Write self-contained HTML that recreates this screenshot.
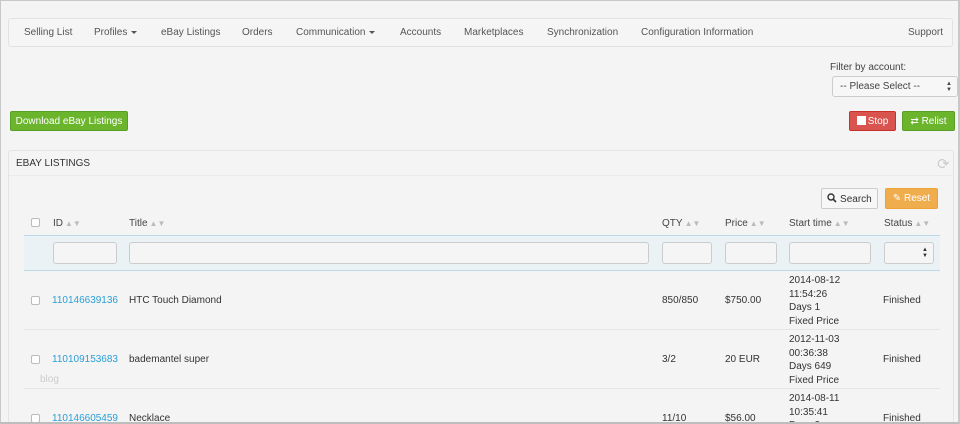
<!DOCTYPE html>
<html><head><style>
*{box-sizing:border-box;margin:0;padding:0}
html,body{width:960px;height:424px;overflow:hidden;background:#f4f4f4}
body{font-family:"Liberation Sans",sans-serif;font-size:10px;color:#333;position:relative}
.frame{position:absolute;left:0;top:0;width:960px;height:424px;border:1px solid #c8c8c8;border-right:2px solid #c8c8c8;border-bottom:2px solid #bdbdbd;z-index:5}
.w{position:absolute;left:0;top:1px;width:960px;height:424px}
.a{position:absolute;white-space:nowrap}
.nav{position:absolute;left:8px;top:17px;width:945px;height:29px;border:1px solid #e2e2e2;border-radius:3px;background:#f5f5f5}
.nav span{position:absolute;top:8px;color:#555;font-size:10px}
.car{display:inline-block;border-top:3px solid #555;border-left:3px solid transparent;border-right:3px solid transparent;vertical-align:middle;margin-left:4px}
.btn{position:absolute;border-radius:2px;color:#fff;font-size:10px;text-align:center}
.inp{position:absolute;top:242px;height:22px;border:1px solid #ccc;border-radius:3px;background:#f5f5f5}
.sort{color:#bbb;font-size:8px;margin-left:2px}
.th{position:absolute;top:217px;color:#444}
.cb{position:absolute;left:31px;width:9px;height:9px;border:1px solid #bbb;border-radius:2px;background:#fff}
.link{color:#2a9fd6}
.hr{position:absolute;left:24px;width:916px;height:1px;background:#e6e6e6}
.t{line-height:13.5px}
</style></head><body>
<div class="frame"></div>
<div class="w">
<div class="nav">
<span style="left:15px">Selling List</span>
<span style="left:85px">Profiles<i class="car"></i></span>
<span style="left:152px">eBay Listings</span>
<span style="left:233px">Orders</span>
<span style="left:287px">Communication<i class="car"></i></span>
<span style="left:391px">Accounts</span>
<span style="left:455px">Marketplaces</span>
<span style="left:538px">Synchronization</span>
<span style="left:632px">Configuration Information</span>
<span style="left:899px">Support</span>
</div>
<div class="a" style="left:830px;top:61px;color:#444">Filter by account:</div>
<div class="a" style="left:832px;top:75px;width:126px;height:21px;border:1px solid #ccc;border-radius:3px;background:#f7f7f7;padding:4px 0 0 7px;color:#444">-- Please Select --<span style="position:absolute;right:5px;top:4px;font-size:6px;line-height:6px">▲<br>▼</span></div>
<div class="btn" style="left:10px;top:110px;width:118px;height:20px;background:#6bb52d;border:1px solid #5a9f25;padding-top:4px">Download eBay Listings</div>
<div class="btn" style="left:849px;top:110px;width:47px;height:20px;background:#d9534f;border:1px solid #c9302c;padding-top:4px"><span style="display:inline-block;width:9px;height:9px;background:#fff;vertical-align:-1px;margin-right:2px"></span>Stop</div>
<div class="btn" style="left:902px;top:110px;width:53px;height:20px;background:#6bb52d;border:1px solid #5a9f25;padding-top:4px">⇄ Relist</div>
<div class="a" style="left:8px;top:149px;width:946px;height:280px;border:1px solid #e4e4e4;border-radius:3px"></div>
<div class="a" style="left:9px;top:174px;width:944px;height:1px;background:#eaeaea"></div>
<div class="a" style="left:16px;top:157px;font-size:10px;color:#333;font-family:'Liberation Sans Narrow','Liberation Sans',sans-serif">EBAY LISTINGS</div>
<div class="a" style="left:937px;top:154px;font-size:15px;color:#ccc">⟳</div>
<div class="btn" style="left:821px;top:187px;width:57px;height:21px;border:1px solid #ccc;background:#f7f7f7;color:#333;padding-top:4px"><svg width="10" height="10" viewBox="0 0 10 10" style="vertical-align:-1px"><circle cx="4" cy="4" r="3" fill="none" stroke="#333" stroke-width="1.4"/><path d="M6.2 6.2L9 9" stroke="#333" stroke-width="1.6"/></svg> Search</div>
<div class="btn" style="left:885px;top:187px;width:53px;height:21px;background:#f0ad4e;border:1px solid #eea236;padding-top:4px">✎ Reset</div>
<div class="cb" style="top:217px"></div>
<div class="th" style="left:53px">ID<span class="sort">▲▼</span></div>
<div class="th" style="left:129px">Title<span class="sort">▲▼</span></div>
<div class="th" style="left:662px">QTY<span class="sort">▲▼</span></div>
<div class="th" style="left:725px">Price<span class="sort">▲▼</span></div>
<div class="th" style="left:789px">Start time<span class="sort">▲▼</span></div>
<div class="th" style="left:884px">Status<span class="sort">▲▼</span></div>
<div class="a" style="left:24px;top:234px;width:916px;height:36px;background:#eaf2f5;border-top:1px solid #bcd9e8;border-bottom:1px solid #bcd9e8"></div>
<div class="inp" style="left:53px;width:64px;top:241px"></div>
<div class="inp" style="left:129px;width:520px;top:241px"></div>
<div class="inp" style="left:662px;width:50px;top:241px"></div>
<div class="inp" style="left:725px;width:52px;top:241px"></div>
<div class="inp" style="left:789px;width:82px;top:241px"></div>
<div class="inp" style="left:884px;width:50px;top:241px"><span style="position:absolute;right:5px;top:4px;font-size:6px;line-height:6px">▲<br>▼</span></div>
<div class="cb" style="top:295px"></div>
<div class="a link" style="left:52px;top:294px">110146639136</div>
<div class="a" style="left:129px;top:294px">HTC Touch Diamond</div>
<div class="a" style="left:662px;top:294px">850/850</div>
<div class="a" style="left:725px;top:294px">$750.00</div>
<div class="a t" style="left:789px;top:273px">2014-08-12<br>11:54:26<br>Days 1<br>Fixed Price</div>
<div class="a" style="left:883px;top:294px">Finished</div>
<div class="hr" style="top:328px"></div>
<div class="cb" style="top:354px"></div>
<div class="a link" style="left:52px;top:353px">110109153683</div>
<div class="a" style="left:129px;top:353px">bademantel super</div>
<div class="a" style="left:40px;top:373px;color:#ccc">blog</div>
<div class="a" style="left:662px;top:353px">3/2</div>
<div class="a" style="left:725px;top:353px">20 EUR</div>
<div class="a t" style="left:789px;top:332px">2012-11-03<br>00:36:38<br>Days 649<br>Fixed Price</div>
<div class="a" style="left:883px;top:353px">Finished</div>
<div class="hr" style="top:387px"></div>
<div class="cb" style="top:413px"></div>
<div class="a link" style="left:52px;top:412px">110146605459</div>
<div class="a" style="left:129px;top:412px">Necklace</div>
<div class="a" style="left:662px;top:412px">11/10</div>
<div class="a" style="left:725px;top:412px">$56.00</div>
<div class="a t" style="left:789px;top:391px">2014-08-11<br>10:35:41<br>Days 3</div>
<div class="a" style="left:883px;top:412px">Finished</div>
</div>
</body></html>
